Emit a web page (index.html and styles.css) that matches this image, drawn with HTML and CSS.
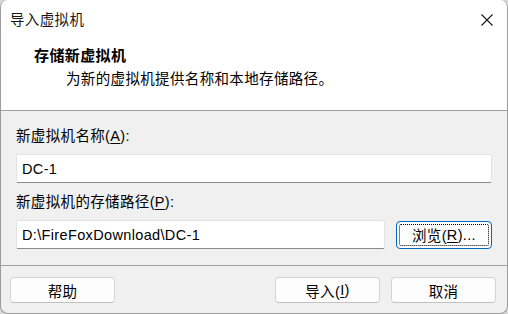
FILE: index.html
```html
<!DOCTYPE html>
<html lang="zh-CN">
<head>
<meta charset="utf-8">
<link rel="stylesheet" href="styles.css">
</head>
<body>
<div class="window">
  <div class="top">
    <div class="titlebar">
      <span class="title">导入虚拟机</span>
      <svg class="close" width="12" height="12" viewBox="0 0 12 12"><path d="M0.5 0.5 L11.5 11.5 M11.5 0.5 L0.5 11.5" stroke="#1a1a1a" stroke-width="1.1" fill="none"/></svg>
    </div>
    <div class="header">
      <div class="heading">存储新虚拟机</div>
      <div class="sub">为新的虚拟机提供名称和本地存储路径。</div>
    </div>
  </div>
  <div class="rule"></div>
  <div class="body">
    <div class="label label-first">新虚拟机名称(<u>A</u>):</div>
    <div class="input">DC-1</div>
    <div class="label label-second">新虚拟机的存储路径(<u>P</u>):</div>
    <div class="row">
      <div class="input grow">D:\FireFoxDownload\DC-1</div>
      <div class="btn browse"><span class="focus">浏览(<u>R</u>)...</span></div>
    </div>
  </div>
  <div class="rule rule-bottom"></div>
  <div class="footer">
    <div class="btn">帮助</div>
    <div class="spacer"></div>
    <div class="btn">导入(<u>I</u>)</div>
    <div class="btn">取消</div>
  </div>
</div>
</body>
</html>
```
FILE: styles.css
```css
html, body {
  margin: 0;
  padding: 0;
}
body {
  width: 508px;
  height: 314px;
  background: #d6d6d6;
  font-family: "Liberation Sans", "Noto Sans CJK SC", sans-serif;
  font-size: 14.5px;
  letter-spacing: 0.35px;
  color: #000;
  overflow: hidden;
}
.window {
  box-sizing: border-box;
  width: 508px;
  height: 314px;
  border: 1px solid #9c9c9c;
  border-top: 0;
  border-radius: 8px;
  background: #f0f0f0;
  overflow: hidden;
  display: flex;
  flex-direction: column;
}
.top {
  background: #fff;
  height: 110px;
}
.titlebar {
  height: 39px;
  display: flex;
  align-items: center;
  justify-content: space-between;
  padding-left: 9px;
  padding-right: 14px;
}
.title {
  line-height: 20px;
  color: #1a1a1a;
}
.close {
  display: block;
}
.header {
  padding-left: 33px;
}
.heading {
  margin-top: 7px;
  line-height: 20px;
  font-weight: bold;
  font-size: 15px;
  letter-spacing: 0.4px;
}
.sub {
  margin-top: 3px;
  margin-left: 32px;
  line-height: 20px;
}
.rule {
  height: 1px;
  background: #a0a0a0;
}
.body {
  padding: 0 15px;
  display: flex;
  flex-direction: column;
}
.label {
  line-height: 20px;
}
.label-first {
  margin-top: 15px;
  margin-bottom: 8px;
}
.label-second {
  margin-top: 9px;
  margin-bottom: 8px;
}
u {
  text-decoration: underline;
  text-underline-offset: 2px;
}
.input {
  box-sizing: border-box;
  height: 29px;
  background: #fff;
  border: 1px solid #e3e3e3;
  border-bottom-color: #8a8a8a;
  border-radius: 2px;
  padding-left: 5px;
  display: flex;
  align-items: center;
}
.row {
  display: flex;
  align-items: center;
  gap: 11px;
}
.grow {
  flex: 1;
}
.btn {
  box-sizing: border-box;
  width: 105px;
  height: 26px;
  background: #fdfdfd;
  border: 1px solid #d4d4d4;
  border-bottom-color: #c2c2c2;
  border-radius: 4px;
  display: flex;
  align-items: center;
  justify-content: center;
}
.browse {
  width: 96px;
  height: 28px;
  border: 1px solid #0067c0;
  padding: 2px;
}
.focus {
  box-sizing: border-box;
  width: 100%;
  height: 100%;
  border: 1px dotted #000;
  border-radius: 2px;
  display: flex;
  align-items: center;
  justify-content: center;
}
.rule-bottom {
  margin-top: 16px;
}
.footer {
  display: flex;
  gap: 11px;
  padding: 11px 11px 0 9px;
}
.spacer {
  flex: 1;
}
```
